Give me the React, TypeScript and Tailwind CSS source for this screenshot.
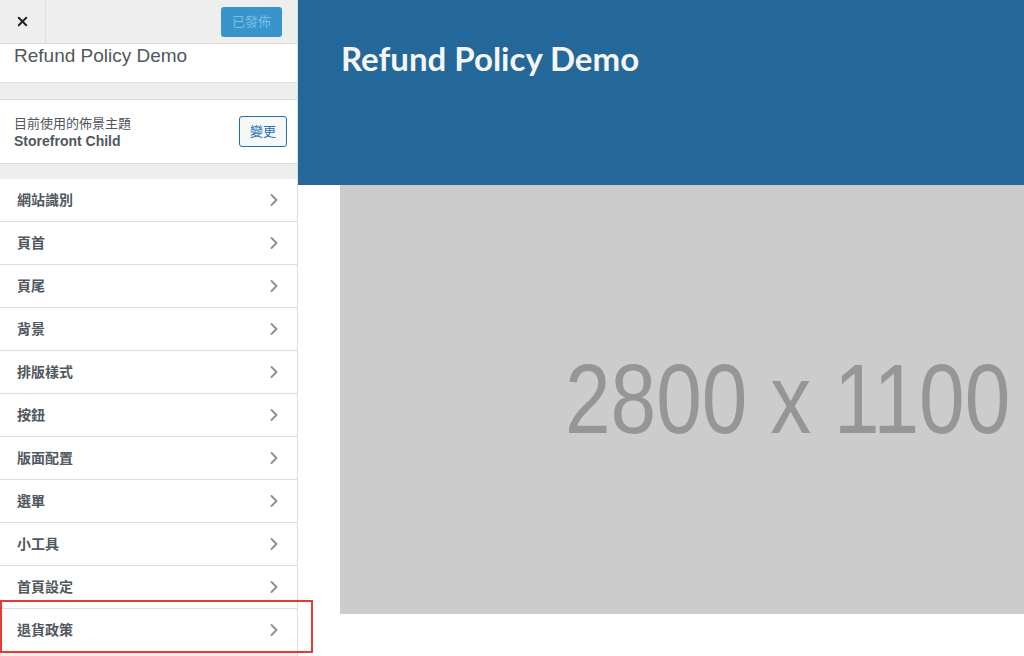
import { ChevronRight, X } from 'lucide-react';

const sans = '"Liberation Sans", "Noto Sans CJK TC", Arial, sans-serif';

const sections = ['網站識別', '頁首', '頁尾', '背景', '排版樣式', '按鈕', '版面配置', '選單', '小工具', '首頁設定', '退貨政策'];

function Sidebar() {
  return (
    <aside className="relative w-[298px] shrink-0 h-full bg-[#eeeeee] border-r border-[#dddddd] flex flex-col">
      {/* 上方工具列 */}
      <div className="h-[44px] flex items-stretch border-b border-[#dddddd]">
        <button type="button" className="w-[46px] flex items-center justify-center border-r border-[#dddddd] text-[#1d2327]">
          <X size={15} strokeWidth={3.2} />
        </button>
        <div className="flex-1 flex items-center justify-end pr-[15px]">
          <button
            type="button"
            className="h-[30px] w-[61px] rounded-[3px] bg-[#3a94cc] text-[13px] text-[#74c1e6]"
          >
            已發佈
          </button>
        </div>
      </div>

      <div className="h-[39px] bg-white border-b border-[#dddddd] px-[14px] pt-[1px]">
        <div className="text-[19px] leading-[22px] text-[#50575e]">Refund Policy Demo</div>
      </div>

      <div className="h-[16px]" />

      <div className="h-[65px] bg-white border-y border-[#dddddd] flex items-center justify-between pl-[14px] pr-[10px]">
        <div className="pt-[1px]">
          <div className="text-[13px] leading-[17px] text-[#50575e]">目前使用的佈景主題</div>
          <div className="text-[14px] leading-[18px] font-bold text-[#50575e]">Storefront Child</div>
        </div>
        <button
          type="button"
          className="h-[31px] w-[48px] rounded-[3px] border border-[#2271b1] bg-[#f6f7f7] text-[13px] text-[#2271b1]"
        >
          變更
        </button>
      </div>

      <div className="h-[15px]" />

      <ul className="bg-white">
        {sections.map((s) => (
          <li
            key={s}
            className="h-[43px] border-b border-[#dddddd] flex items-center justify-between pl-[17px] pr-[13px]"
          >
            <span className="text-[14px] font-bold text-[#50575e]">{s}</span>
            <ChevronRight size={20} strokeWidth={2.3} className="text-[#8c8f94]" />
          </li>
        ))}
      </ul>

      {/* 標註框 */}
      <div className="absolute left-0 top-[600px] w-[313px] h-[53px] border-2 border-[#e53a34] z-10" />
    </aside>
  );
}

function Preview() {
  return (
    <main className="flex-1 h-full bg-white flex flex-col">
      <header className="h-[185px] shrink-0 bg-[#236899] pl-[43px] pt-[36px]">
        <h1 className="text-[33px] leading-[44px] font-bold text-[#f5f5f5]" style={{ fontFamily: 'Lato, "Open Sans", sans-serif' }}>
          Refund Policy Demo
        </h1>
      </header>
      <div className="pl-[42px]">
        <div className="h-[429px] bg-[#cccccc] overflow-hidden flex items-center pl-[225px]">
          <span className="whitespace-nowrap text-[82px] leading-none text-[#969696] scale-y-[1.19]">
            2800 x 1100
          </span>
        </div>
      </div>
    </main>
  );
}

export default function App() {
  return (
    <div className="w-[1024px] h-[656px] flex overflow-hidden" style={{ fontFamily: sans }}>
      <Sidebar />
      <Preview />
    </div>
  );
}
